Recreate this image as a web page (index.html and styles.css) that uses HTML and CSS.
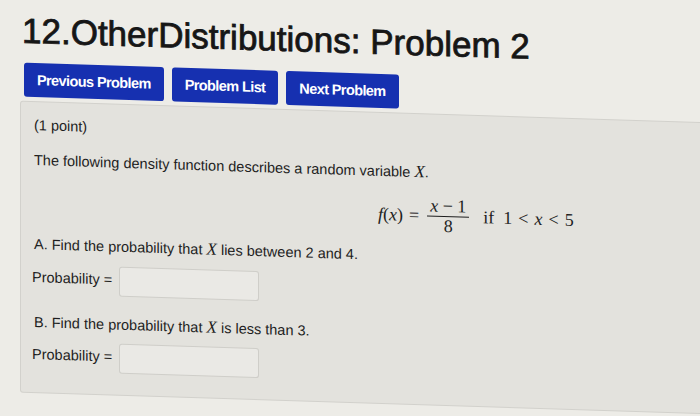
FILE: index.html
```html
<!DOCTYPE html>
<html>
<head>
<meta charset="utf-8">
<link rel="stylesheet" href="styles.css">
</head>
<body>
<div class="sheet">
  <h1 class="title">12.OtherDistributions: Problem 2</h1>
  <div class="nav">
    <span class="btn">Previous Problem</span>
    <span class="btn">Problem List</span>
    <span class="btn">Next Problem</span>
  </div>
  <div class="panel">
    <p class="line">(1 point)</p>
    <p class="line intro">The following density function describes a random variable <i class="mv">X</i>.</p>
    <div class="display">
      <span class="math">
        <i>f</i>(<i>x</i>)<span class="op">=</span>
        <span class="frac"><span class="num"><i>x</i> − 1</span><span class="den">8</span></span>
        <span class="if">if</span>1<span class="op">&lt;</span><i>x</i><span class="op">&lt;</span>5
      </span>
    </div>
    <p class="line qa">A. Find the probability that <i class="mv">X</i> lies between 2 and 4.</p>
    <div class="row r1"><span class="lbl">Probability =</span><span class="inp"></span></div>
    <p class="line qb">B. Find the probability that <i class="mv">X</i> is less than 3.</p>
    <div class="row r2"><span class="lbl">Probability =</span><span class="inp"></span></div>
  </div>
</div>
</body>
</html>
```
FILE: styles.css
```css
html, body {
  margin: 0;
  background: #edece7;
  overflow: hidden;
}
body {
  width: 700px;
  height: 416px;
  font-family: "Liberation Sans", Arial, sans-serif;
  color: #1e1e1e;
}
.sheet {
  transform: skewY(1.8deg);
  transform-origin: 0 0;
  padding: 10px 0 0 20px;
  width: 680px;
}
.title {
  margin: 0 0 0 2px;
  font-size: 35px;
  line-height: 39px;
  font-weight: normal;
  letter-spacing: 0;
  color: #161616;
  -webkit-text-stroke: 0.8px #161616;
  white-space: nowrap;
}
.nav {
  display: flex;
  gap: 8px;
  margin: 13px 0 0 4px;
}
.btn {
  display: flex;
  align-items: center;
  height: 34px;
  padding: 0 13px 0 13px;
  background: #1630b0;
  color: #fff;
  border-radius: 3px;
  font-size: 14.5px;
  font-weight: bold;
  letter-spacing: -0.6px;
}
.panel {
  margin-top: 4px;
  margin-right: -20px;
  background: #e3e2dd;
  border: 1px solid #d2d1cc;
  border-radius: 3px;
  padding: 13px 0 21px 13px;
  font-size: 14.5px;
}
.line {
  margin: 0;
  line-height: 20px;
}
.mv {
  font-family: "Liberation Serif", "Times New Roman", serif;
  font-size: 17px;
}
.intro { margin-top: 15px; }
.display {
  height: 40px;
  margin-top: 13px;
  display: flex;
  align-items: center;
  padding-left: 344px;
}
.math {
  display: flex;
  align-items: center;
  font-family: "Liberation Serif", "Times New Roman", serif;
  font-size: 18px;
}
.op { margin: 0 6px; }
.frac {
  display: inline-flex;
  flex-direction: column;
  align-items: center;
  margin: 0 2px;
}
.num {
  border-bottom: 1px solid #1e1e1e;
  padding: 0 3px 1px;
  line-height: 18px;
}
.den { line-height: 19px; }
.if { margin: 0 9px 0 12px; }
.qa { margin-top: 11px; }
.row {
  display: flex;
  align-items: center;
  margin-left: -2px;
}
.r1 { margin-top: 10px; }
.r2 { margin-top: 9px; }
.lbl { width: 87px; padding-bottom: 4px; }
.inp {
  width: 138px;
  height: 28px;
  background: #eae9e5;
  border: 1px solid #cfcec9;
  border-radius: 3px;
}
.qb { margin-top: 18px; }
```
